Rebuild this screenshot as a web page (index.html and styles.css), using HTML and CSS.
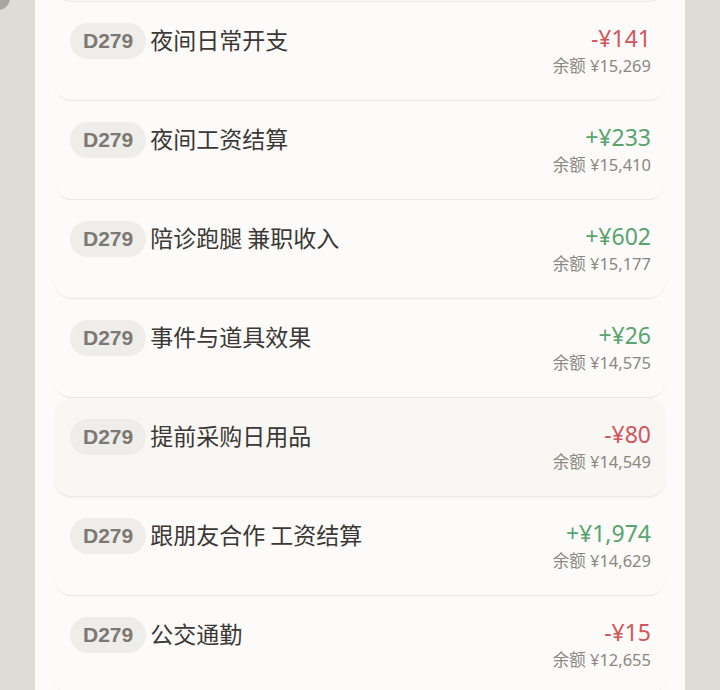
FILE: index.html
```html
<!DOCTYPE html>
<html>
<head>
  <meta charset="utf-8">
  <title>流水记录</title>
  <link rel="stylesheet" href="styles.css">
</head>
<body>
  <div class="corner"></div>
  <div class="panel">
    <div class="list">
      <div class="item"></div>
      <div class="item">
        <div class="left"><span class="day">D279</span><span class="title">夜间日常开支</span></div>
        <div class="right"><div class="amount minus">-¥141</div><div class="balance">余额 ¥15,269</div></div>
      </div>
      <div class="item">
        <div class="left"><span class="day">D279</span><span class="title">夜间工资结算</span></div>
        <div class="right"><div class="amount plus">+¥233</div><div class="balance">余额 ¥15,410</div></div>
      </div>
      <div class="item">
        <div class="left"><span class="day">D279</span><span class="title">陪诊跑腿 兼职收入</span></div>
        <div class="right"><div class="amount plus">+¥602</div><div class="balance">余额 ¥15,177</div></div>
      </div>
      <div class="item">
        <div class="left"><span class="day">D279</span><span class="title">事件与道具效果</span></div>
        <div class="right"><div class="amount plus">+¥26</div><div class="balance">余额 ¥14,575</div></div>
      </div>
      <div class="item hover">
        <div class="left"><span class="day">D279</span><span class="title">提前采购日用品</span></div>
        <div class="right"><div class="amount minus">-¥80</div><div class="balance">余额 ¥14,549</div></div>
      </div>
      <div class="item">
        <div class="left"><span class="day">D279</span><span class="title">跟朋友合作 工资结算</span></div>
        <div class="right"><div class="amount plus">+¥1,974</div><div class="balance">余额 ¥14,629</div></div>
      </div>
      <div class="item">
        <div class="left"><span class="day">D279</span><span class="title">公交通勤</span></div>
        <div class="right"><div class="amount minus">-¥15</div><div class="balance">余额 ¥12,655</div></div>
      </div>
    </div>
  </div>
</body>
</html>
```

FILE: styles.css
```css
body {
  margin: 0;
  height: 690px;
  overflow: hidden;
  background-color: #dfdbd6;
  font-family: "Noto Sans", "Noto Sans CJK SC", sans-serif;
}

.corner {
  position: absolute;
  left: -14px;
  top: -14px;
  width: 24px;
  height: 24px;
  border-radius: 50%;
  background-color: #a9a59f;
}

.panel {
  width: 650px;
  margin: 0 auto;
  height: 690px;
  overflow: hidden;
  background-color: #fcfbf9;
}

.list {
  padding: 0 20px;
  margin-top: -97px;
}

.item {
  display: flex;
  justify-content: space-between;
  align-items: flex-start;
  height: 77px;
  padding: 21px 14px 0 15px;
  border-bottom: 1px solid #ebe8e3;
  border-radius: 16px;
}

.item.hover {
  background-color: #f8f7f4;
  box-shadow: 0 1px 3px rgba(0, 0, 0, 0.035);
}

.left {
  display: flex;
  align-items: center;
}

.day {
  display: inline-block;
  height: 36px;
  line-height: 36px;
  padding: 0 13px;
  border-radius: 18px;
  background-color: #efedea;
  color: #7c7873;
  font-family: "Liberation Sans", Arial, sans-serif;
  font-weight: bold;
  font-size: 21px;
}

.title {
  margin-left: 4px;
  margin-top: -4px;
  font-size: 23px;
  color: #3b3835;
  font-family: "Noto Sans CJK SC", sans-serif;
}

.right {
  text-align: right;
}

.amount {
  font-size: 23px;
  line-height: 30px;
}

.minus {
  color: #d2555a;
}

.plus {
  color: #58a36f;
}

.balance {
  margin-top: 3px;
  font-size: 16.5px;
  line-height: 20px;
  color: #8b8781;
}
```
